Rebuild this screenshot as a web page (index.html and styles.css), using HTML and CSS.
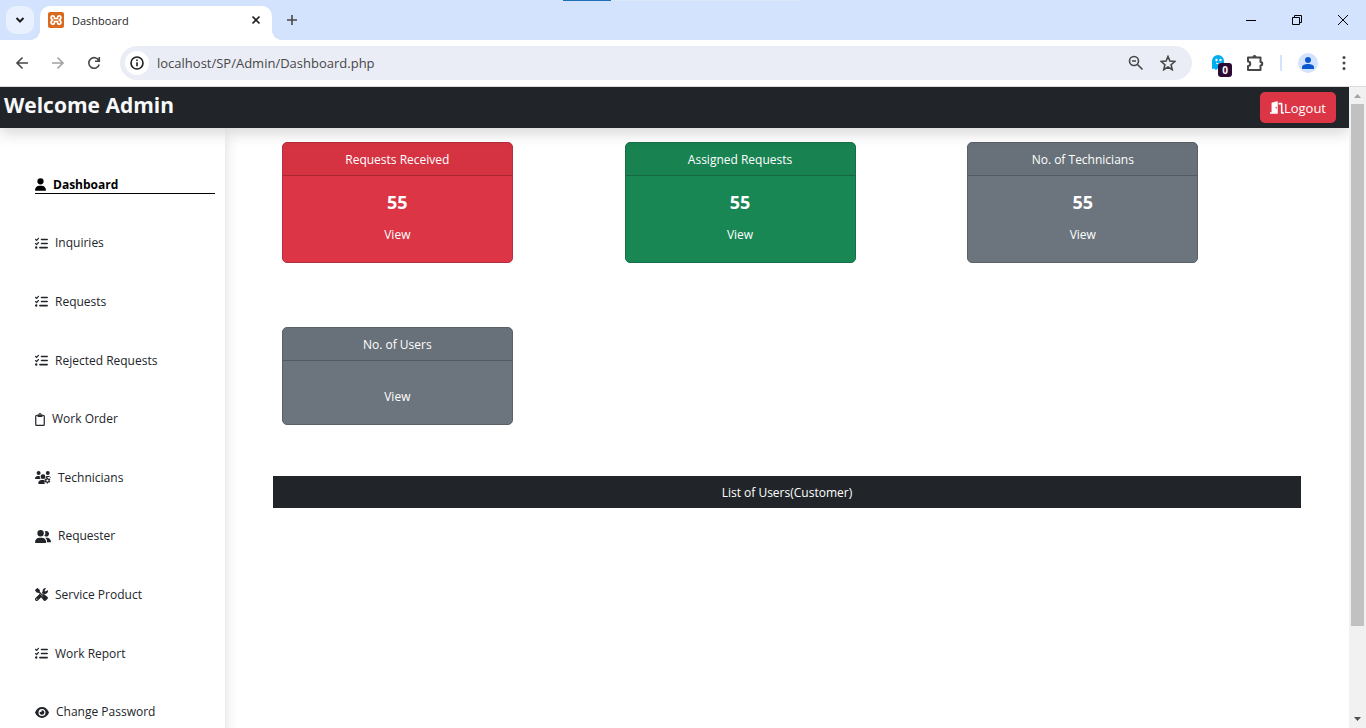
FILE: index.html
```html
<!DOCTYPE html>
<html lang="en">
<head>
<meta charset="utf-8">
<meta name="viewport" content="width=device-width, initial-scale=1">
<title>Dashboard</title>
<link rel="stylesheet" href="styles.css">
</head>
<body>
<svg class="defs" aria-hidden="true">
  <symbol id="i-list" viewBox="0 0 512 512"><path d="M152.1 38.2c9.900 8.900 10.700 24 1.800 33.900l-72 80c-4.400 4.900-10.600 7.800-17.200 7.900s-12.900-2.400-17.600-7L7 113C-2.300 103.600-2.300 88.400 7 79s24.600-9.400 33.900 0l22.100 22.100 55.100-61.200c8.900-9.900 24-10.700 33.900-1.800zm0 160c9.900 8.900 10.700 24 1.800 33.900l-72 80c-4.400 4.900-10.600 7.800-17.200 7.900s-12.900-2.400-17.600-7L7 273c-9.400-9.400-9.400-24.600 0-33.900s24.600-9.400 33.900 0l22.100 22.100 55.100-61.200c8.900-9.900 24-10.700 33.900-1.800zM224 96c0-17.700 14.300-32 32-32h224c17.700 0 32 14.300 32 32s-14.300 32-32 32H256c-17.700 0-32-14.300-32-32zm0 160c0-17.700 14.300-32 32-32h224c17.700 0 32 14.300 32 32s-14.300 32-32 32H256c-17.700 0-32-14.300-32-32zM160 416c0-17.700 14.300-32 32-32h288c17.700 0 32 14.300 32 32s-14.300 32-32 32H192c-17.700 0-32-14.300-32-32zM48 368a48 48 0 1 1 0 96 48 48 0 1 1 0-96z"/></symbol>
  <symbol id="i-user" viewBox="0 0 448 512"><path d="M224 256A128 128 0 1 0 224 0a128 128 0 1 0 0 256zm-45.700 48C79.800 304 0 383.800 0 482.300C0 498.700 13.300 512 29.700 512h388.600c16.400 0 29.700-13.300 29.700-29.700C448 383.800 368.200 304 269.700 304z"/></symbol>
  <symbol id="i-clip" viewBox="0 0 384 512"><rect x="24" y="88" width="336" height="400" rx="40" fill="none" stroke="currentColor" stroke-width="48"/><path d="M96 64h36a60 60 0 0 1 120 0h36v72a24 24 0 0 1-24 24H120a24 24 0 0 1-24-24z"/><circle cx="192" cy="72" r="20" fill="#fff"/></symbol>
  <symbol id="i-usersgear" viewBox="0 0 640 512"><circle cx="144" cy="80" r="80"/><circle cx="512" cy="80" r="80"/><circle cx="320" cy="224" r="96"/><path d="M0 298.700C0 239.800 47.800 192 106.700 192h42.700c16 0 31 3.500 44.600 9.700-8 45 5 90 41 118.300H21.300C9.600 320 0 310.400 0 298.700zM445 202c15-7 30-10 45-10h43c59 0 107 48 107 107l-60-59h-92l-22 46-48-10c20-20 28-44 27-74zM261 352h118l14 60-22 50 30 50H155c-15 0-27-12-27-27 0-73 60-133 133-133z"/><path fill-rule="evenodd" d="M474 258h44l10 38 24 14 38-11 22 38-28 28v28l28 28-22 38-38-11-24 14-10 38h-44l-10-38-24-14-38 11-22-38 28-28v-28l-28-28 22-38 38 11 24-14zm22 77a44 44 0 1 0 0 88 44 44 0 0 0 0-88z"/></symbol>
  <symbol id="i-users" viewBox="0 0 640 512"><circle cx="224" cy="128" r="128"/><path d="M178 304h92c98 0 178 80 178 178 0 17-13 30-30 30H30c-17 0-30-13-30-30 0-98 80-178 178-178zM372 230c28-27 44-62 44-102 0-29-9-57-23-80a112 112 0 1 1 42 208c-24 0-46-9-63-26zM406 304h75c88 0 159 71 159 159 0 14-11 25-25 25H471c6-13 9-25 9-37 0-60-27-113-74-147z"/></symbol>
  <symbol id="i-tools" viewBox="0 0 512 512"><path d="M79 5 5 79c-6 6-7 14-2 22l64 80c4 6 9 9 16 9h55l107 107-18 50 116 145c20 26 58 28 81 5l68-68c23-23 20-61-5-81L343 234l-48 18L190 143V84c0-7-4-13-10-17L101 3c-8-5-16-4-22 2z"/><path d="M20 396 198 218l96 96L116 492A68 68 0 0 1 20 396z"/><path d="M505 97c6-7 0-19-10-13l-70 44-42-1-1-42 44-69C432 7 421 0 411 2c-72 2-122 69-109 137l-24 24v48l45 22 14-7 41 17c68 2 131-50 134-112 1-12-1-24-7-34z"/><circle cx="71" cy="440" r="22" fill="#fff"/><path d="m178 208 132 132" stroke="#fff" stroke-width="18"/></symbol>
  <symbol id="i-eye" viewBox="0 0 576 512"><path fill-rule="evenodd" d="M288 32C170 32 63 108 3 244c-4 8-4 16 0 24 60 136 167 212 285 212s225-76 285-212c4-8 4-16 0-24C513 108 406 32 288 32zm0 80a144 144 0 1 1 0 288 144 144 0 0 1 0-288z"/><path d="M288 160a96 96 0 1 1-92 70c44 22 102-12 76-69z"/></symbol>
  <symbol id="i-door" viewBox="0 0 576 512"><path fill-rule="evenodd" d="M64 64 288 2c20-5 32 8 32 30v480H0v-64h64zm192 156a28 36 0 1 0 0 72 28 36 0 0 0 0-72z"/><path d="M352 64h112c27 0 48 21 48 48v336h64v64H480c-18 0-32-14-32-32V128h-96z"/></symbol>
</svg>

<div class="browser">
  <div class="tabs">
    <button class="tab-search" aria-label="Search tabs"><svg width="10" height="10" viewBox="0 0 10 10"><path d="m1.500 3 3.500 3.500L8.500 3" class="line thick"/></svg></button>
    <div class="tab">
      <svg width="16" height="16" viewBox="0 0 16 16"><rect width="16" height="16" rx="2" fill="#d96a20"/><path d="M5.300 3.800C3.500 3.500 2.800 5 3.200 6.400L4.500 8 3.200 9.500c-.5 1.500.3 3 2.100 2.700C6.700 12 6.500 10.300 6.500 9.500h3c0 .8-.2 2.500 1.200 2.700 1.800.3 2.600-1.200 2.100-2.700L11.500 8l1.300-1.600c.4-1.400-.3-2.900-2.100-2.600C9.300 4 9.500 5.500 9.500 6.500h-3c0-1 .2-2.500-1.200-2.700z" fill="none" stroke="#fff" stroke-width="1.700"/></svg>
      <span class="tab-title">Dashboard</span>
      <button class="plain" aria-label="Close tab"><svg width="10" height="10" viewBox="0 0 10 10"><path d="m1.500 1.500 7 7m0-7-7 7" class="line"/></svg></button>
    </div>
    <button class="plain new-tab" aria-label="New tab"><svg width="12" height="12" viewBox="0 0 12 12"><path d="M6 1v10M1 6h10" class="line"/></svg></button>
    <div class="drag-strip"></div>
    <div class="window-buttons">
      <button class="plain" aria-label="Minimize"><svg width="10" height="10" viewBox="0 0 10 10"><path d="M0 5.500h10" class="line thin"/></svg></button>
      <button class="plain" aria-label="Restore"><svg width="10" height="10" viewBox="0 0 10 10"><path d="M.5 2.500h7v7h-7zM2.500 2.500v-2h7v7h-2" class="line thin"/></svg></button>
      <button class="plain" aria-label="Close"><svg width="10" height="10" viewBox="0 0 10 10"><path d="m0 0 10 10M10 0 0 10" class="line thin"/></svg></button>
    </div>
  </div>

  <div class="toolbar">
    <div class="nav-buttons">
      <button class="plain" aria-label="Back"><svg width="14" height="14" viewBox="0 0 14 14"><path d="M13 7H2m5.500-5.500L2 7l5.500 5.500" class="line"/></svg></button>
      <button class="plain faded" aria-label="Forward"><svg width="14" height="14" viewBox="0 0 14 14"><path d="M1 7h11M6.500 1.500 12 7l-5.500 5.500" class="line"/></svg></button>
      <button class="plain" aria-label="Reload"><svg width="14" height="14" viewBox="0 0 14 14"><path d="M11.800 4.500A5.300 5.300 0 1 0 12.200 8.500M12.300 1v4.200H8" class="line"/></svg></button>
    </div>
    <div class="omnibox">
      <button class="site-info" aria-label="Site information"><svg width="16" height="16" viewBox="0 0 16 16"><circle cx="8" cy="8" r="6" class="line"/><path d="M8 7.200v4M8 4.500v1.500" class="line"/></svg></button>
      <input class="url" type="text" aria-label="Address" value="localhost/SP/Admin/Dashboard.php">
      <button class="plain" aria-label="Zoom"><svg width="16" height="16" viewBox="0 0 16 16"><circle cx="6" cy="6" r="4.500" class="line"/><path d="m9.500 9.500 5 5M4 6h4" class="line"/></svg></button>
      <button class="plain" aria-label="Bookmark"><svg width="16" height="16" viewBox="0 0 16 16"><path d="m8 1.500 1.900 4.600 4.900.4-3.700 3.200 1.100 4.900L8 12l-4.200 2.600 1.100-4.900-3.700-3.200 4.900-.4z" class="line"/></svg></button>
    </div>
    <div class="extensions">
      <button class="plain ghost" aria-label="Tracker blocker"><svg width="14" height="16" viewBox="0 0 14 16"><path d="M1 14V6a6 6 0 0 1 12 0v8l-2-1-2 2-2-1.500L5 15l-2-1.500z" fill="#00aef0"/><circle cx="5.500" cy="5" r="1.200" fill="#fff"/><circle cx="9.500" cy="5" r="1.200" fill="#fff"/><path d="M5 8q2.500 2 5 0" stroke="#fff" fill="none"/></svg><span class="badge">0</span></button>
      <button class="plain" aria-label="Extensions"><svg width="18" height="18" viewBox="0 0 18 18"><path d="M2 3.500h12.500V8a1.500 1.500 0 0 1 0 3.500V16H2v-4a2.200 2.200 0 0 0 0-4.400z" class="line thick" stroke-linejoin="round"/><path d="M6.500 3a2 2 0 0 1 4 0zM15 7.700a2 2 0 0 1 0 4z" fill="currentColor"/></svg></button>
      <span class="divider"></span>
      <button class="plain" aria-label="Profile"><svg width="20" height="20" viewBox="0 0 20 20"><circle cx="10" cy="10" r="10" fill="#d3e3fd"/><circle cx="10" cy="7" r="3" fill="#0b57d0"/><path d="M4 16v-2c0-4 12-4 12 0v2z" fill="#0b57d0"/></svg></button>
      <button class="plain" aria-label="Menu"><svg width="4" height="16" viewBox="0 0 4 16" fill="currentColor"><circle cx="2" cy="2.500" r="1.500"/><circle cx="2" cy="8" r="1.500"/><circle cx="2" cy="13.500" r="1.500"/></svg></button>
    </div>
  </div>

  <div class="viewport">
    <div class="page">
      <header class="topbar">
        <h1>Welcome Admin</h1>
        <button class="logout"><svg class="icon w14"><use href="#i-door"/></svg>Logout</button>
      </header>
      <div class="columns">
        <nav class="sidebar">
          <ul>
            <li><a class="active" href="#"><svg class="icon w11"><use href="#i-user"/></svg>Dashboard</a></li>
            <li><a href="#"><svg class="icon w13"><use href="#i-list"/></svg>Inquiries</a></li>
            <li><a href="#"><svg class="icon w13"><use href="#i-list"/></svg>Requests</a></li>
            <li><a href="#"><svg class="icon w13"><use href="#i-list"/></svg>Rejected Requests</a></li>
            <li><a href="#"><svg class="icon w10"><use href="#i-clip"/></svg>Work Order</a></li>
            <li><a href="#"><svg class="icon w16"><use href="#i-usersgear"/></svg>Technicians</a></li>
            <li><a href="#"><svg class="icon w16"><use href="#i-users"/></svg>Requester</a></li>
            <li><a href="#"><svg class="icon w13"><use href="#i-tools"/></svg>Service Product</a></li>
            <li><a href="#"><svg class="icon w13"><use href="#i-list"/></svg>Work Report</a></li>
            <li><a href="#"><svg class="icon w14"><use href="#i-eye"/></svg>Change Password</a></li>
          </ul>
        </nav>
        <main class="content">
          <div class="cards">
            <section class="card red"><h2>Requests Received</h2><div class="card-body"><strong>55</strong><a href="#">View</a></div></section>
            <section class="card green"><h2>Assigned Requests</h2><div class="card-body"><strong>55</strong><a href="#">View</a></div></section>
            <section class="card gray"><h2>No. of Technicians</h2><div class="card-body"><strong>55</strong><a href="#">View</a></div></section>
            <section class="card gray"><h2>No. of Users</h2><div class="card-body"><a href="#">View</a></div></section>
          </div>
          <p class="list-title">List of Users(Customer)</p>
        </main>
      </div>
    </div>
    <div class="scrollbar" aria-hidden="true">
      <svg width="17" height="17" viewBox="0 0 17 17"><path d="M5 11h7L8.500 7z" fill="#a3a3a3"/></svg>
      <div class="track"><div class="thumb"></div></div>
      <svg width="17" height="17" viewBox="0 0 17 17"><path d="M5 6h7l-3.500 4z" fill="#505050"/></svg>
    </div>
  </div>
</div>
</body>
</html>
```

FILE: styles.css
```css
* { box-sizing: border-box; }
body {
  margin: 0;
  font-family: "Open Sans", "Noto Sans", sans-serif;
  font-size: 12px;
  line-height: 20px;
  color: #212529;
  background: #fff;
}
h1, h2, p, ul { margin: 0; padding: 0; }
ul { list-style: none; }
a { color: inherit; text-decoration: none; }
button, input { font: inherit; color: inherit; }
svg { flex: none; display: block; }
.defs { position: absolute; width: 0; height: 0; }
.line { fill: none; stroke: currentColor; stroke-width: 1.6; }
.thick { stroke-width: 2; }
.thin { stroke-width: 1; }
.icon { height: 13px; fill: currentColor; }
.w10 { width: 10px; }
.w11 { width: 11px; }
.w13 { width: 13px; }
.w14 { width: 14px; }
.w16 { width: 16px; }

.browser { display: flex; flex-direction: column; height: 100vh; overflow: hidden; }
.plain { display: flex; padding: 0; border: 0; background: none; color: #474747; }

/* Tab strip */
.tabs { display: flex; align-items: center; height: 40px; padding-left: 6px; background: #d3e3fd; }
.tab-search {
  display: grid; place-items: center; width: 28px; height: 28px; padding: 0;
  border: 0; border-radius: 10px; background: #e9f1fe; color: #1f1f1f;
}
.tab {
  position: relative;
  align-self: flex-end;
  display: flex; align-items: center; gap: 8px;
  width: 232px; height: 34px; margin-left: 6px; padding: 0 11px 6px 8px;
  border-radius: 10px 10px 0 0; background: #fff;
}
.tab::before, .tab::after {
  content: ""; position: absolute; bottom: 0; width: 10px; height: 10px;
}
.tab::before { right: 100%; background: radial-gradient(circle at 0 0, transparent 10px, #fff 10px); }
.tab::after { left: 100%; background: radial-gradient(circle at 100% 0, transparent 10px, #fff 10px); }
.tab-title { flex: 1; padding-top: 1px; color: #1f1f1f; font-size: 11px; }
.tab .plain { color: #1f1f1f; }
.new-tab { margin-left: 14px; }
.drag-strip {
  flex: none; align-self: flex-start; width: 240px; height: 1px; margin-left: 265px;
  background: linear-gradient(to right, #1d6fb8 48px, #dce8f8 48px);
}
.window-buttons { display: flex; gap: 36px; margin-left: auto; padding-right: 18px; }
.window-buttons .plain { color: #000; }

/* Toolbar */
.toolbar {
  display: flex; align-items: center; height: 47px; padding: 0 20px 0 15px;
  border-bottom: 1px solid #dcdcdc; background: #fff;
}
.nav-buttons { display: flex; gap: 22px; margin-right: 19px; }
.faded { opacity: .5; }
.omnibox {
  flex: 1; display: flex; align-items: center; gap: 16px;
  height: 34px; padding: 0 16px 0 5px; border-radius: 17px; background: #eaedf6;
}
.site-info {
  display: grid; place-items: center; width: 24px; height: 24px; padding: 0;
  border: 0; border-radius: 50%; background: #fff; color: #1f1f1f;
}
.url {
  flex: 1; min-width: 0; margin-left: -8px; padding: 0;
  border: 0; background: none; color: #474747; font-size: 13px;
}
.extensions { display: flex; align-items: center; gap: 16px; margin-left: 19px; }
.ghost { position: relative; margin-right: 5px; }
.badge {
  position: absolute; left: 7px; top: 8px; width: 14px; height: 14px; border-radius: 3px;
  background: #2b0a34; color: #fff; font-size: 10px; font-weight: 700; line-height: 14px;
}
.divider { width: 2px; height: 16px; background: #d3e3fd; }
.extensions .plain:last-child { margin-left: 8px; }

/* Page area */
.viewport { flex: 1; display: flex; min-height: 0; }
.page { flex: 1; display: flex; flex-direction: column; min-width: 0; overflow: hidden; }
.topbar {
  position: relative;
  flex: none; display: flex; justify-content: space-between; align-items: center;
  height: 41px; padding: 0 13px 0 4px;
  background: #212529; box-shadow: 0 6px 13px rgba(0, 0, 0, .15);
}
.topbar h1 { padding-bottom: 6px; font-size: 21px; line-height: 28px; font-weight: 700; color: #f8f9fa; }
.logout {
  display: flex; align-items: center; height: 31px; padding: 0 10px;
  border: 0; border-radius: 5px; background: #dc3545; color: #fff; font-size: 13px;
}
.columns { flex: 1; display: grid; grid-template-columns: 1fr 5fr; min-height: 0; }
.sidebar { padding: 27px 10px 0 35px; box-shadow: 0 6px 13px rgba(0, 0, 0, .15); }
.sidebar ul { display: grid; grid-auto-rows: 1fr; align-items: center; height: 586px; }
.sidebar a {
  display: flex; align-items: center; gap: 7px;
  padding-top: 2px; border-bottom: 1px solid transparent; line-height: 16px;
}
.sidebar .active { border-color: #000; color: #000; font-weight: 700; }

.content { padding: 14px 48px 0; }
.cards { display: grid; grid-template-columns: repeat(3, 1fr); row-gap: 64px; align-items: start; }
.card {
  width: 231px; margin-left: 9px; overflow: hidden; border: 1px solid; border-radius: 5px;
  color: #fff; text-align: center;
}
.card h2 {
  padding: 7px 6px 5px; border-bottom: 1px solid rgba(0, 0, 0, .2); background: rgba(0, 0, 0, .03);
  font-size: 12px; font-weight: 400;
}
.card-body { display: flex; flex-direction: column; gap: 11px; padding: 14px 12px 17px; }
.card-body strong { font-size: 18px; line-height: 24px; font-weight: 700; }
.card-body a:only-child { padding-top: 12px; }
.red { background: #dc3545; border-color: #b32f3d; }
.green { background: #198754; border-color: #176e46; }
.gray { background: #6c757d; border-color: #5a6268; }
.list-title { margin-top: 51px; padding: 7px 6px 5px; background: #212529; color: #fff; text-align: center; }

/* Scrollbar */
.scrollbar { display: flex; flex-direction: column; width: 17px; background: #f1f1f1; }
.track { flex: 1; padding: 0 2px; }
.thumb { height: 86%; background: #c1c1c1; }
```
